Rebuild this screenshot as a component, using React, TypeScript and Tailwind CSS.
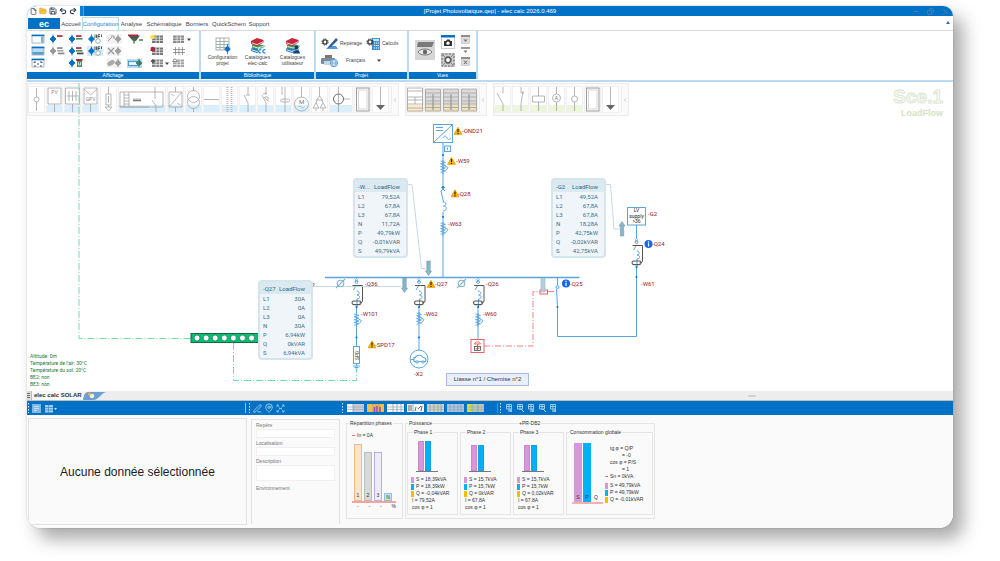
import type { ReactNode } from "react";
import { ChevronLeft, Copy, File, FolderOpen, MapPin, Minus, PenLine, Redo2, Save, Undo2, X } from "lucide-react";

type IconProps = { w: number; h: number; children: ReactNode; className?: string };

const Icon = ({ w, h, children, className = "" }: IconProps) => (
  <svg width={w} height={h} viewBox={`0 0 ${w} ${h}`} fill="none" className={`block shrink-0 ${className}`} aria-hidden="true">
    {children}
  </svg>
);

const BLUE = "#0072c6";

/* ---------- title bar ---------- */

const TitleBar = () => (
  <header className="flex h-[10px] items-stretch bg-[#0072c6]">
    <div className="flex w-[53px] items-center justify-between bg-white pr-[3px] pl-[3px]">
      <button aria-label="Nouveau"><File size={7} color="#444" strokeWidth={2.4} /></button>
      <button aria-label="Ouvrir"><FolderOpen size={8} color="#e0a92e" fill="#f5c542" /></button>
      <button aria-label="Enregistrer"><Save size={8} color="#2c3e57" strokeWidth={2.6} /></button>
      <button aria-label="Annuler"><Undo2 size={8} color="#2c3e57" strokeWidth={3.4} /></button>
      <button aria-label="Rétablir"><Redo2 size={8} color="#2c3e57" strokeWidth={3.4} /></button>
    </div>
    <div className="w-[4px] border-r border-[#4f9bd8] bg-[#0f7fd0]" />
    <h1 className="flex-1 pr-[16px] text-center text-[6px] leading-[10px] text-white">
      [Projet Photovoltaique.qep] - elec calc 2026.0.469
    </h1>
    <div className="flex items-center gap-[8px] pr-[4px] text-[#5d7f9c]">
      <button aria-label="Réduire"><Minus size={7} strokeWidth={3} /></button>
      <button aria-label="Restaurer"><Copy size={7} strokeWidth={3} className="-scale-x-100" /></button>
      <button aria-label="Fermer"><X size={7} strokeWidth={3} /></button>
    </div>
  </header>
);

/* ---------- tabs ---------- */

const tabs = [
  { label: "Accueil", width: "w-[22px]" },
  { label: "Configuration", width: "w-[37px]", active: true },
  { label: "Analyse", width: "w-[25px]" },
  { label: "Schématique", width: "w-[40px]" },
  { label: "Borniers", width: "w-[26px]" },
  { label: "QuickSchem", width: "w-[38px]" },
  { label: "Support", width: "w-[22px]" },
];

const TabBar = () => (
  <nav className="flex h-[15px] items-end border-b border-[#d9d9d9] bg-white pl-px">
    <button className="mb-px h-[11px] w-[32px] bg-[#0072c6] text-[9px] leading-[10px] font-bold text-white">ec</button>
    {tabs.map((tab) => (
      <button
        key={tab.label}
        className={`${tab.width} h-[13px] text-center text-[6px] leading-[12px] whitespace-nowrap ${
          tab.active ? "border-x border-t border-[#b5d8f3] text-[#2a86cf]" : "text-[#444]"
        }`}
      >
        <span className="-mx-2">{tab.label}</span>
      </button>
    ))}
    <button aria-label="Réduire le ruban" className="mr-[3px] mb-[6px] ml-auto">
      <Icon w={4} h={3}><path d="M0 3L2 0L4 3Z" fill="#2f6fb0" /></Icon>
    </button>
  </nav>
);

/* ---------- ribbon ---------- */

const Diamond = ({ x, color = BLUE }: { x: number; color?: string }) => (
  <path d={`M${x} 0.5V9.5M${x} 2L${x + 3} 5L${x} 8L${x - 3} 5Z`} fill={color} stroke={color} strokeWidth="0.9" />
);

const grid = (x: number, color: string) => (
  <>
    <rect x={x} y="1.5" width="11" height="7.5" fill={color} />
    <path d={`M${x} 4H${x + 11}M${x} 6.5H${x + 11}M${x + 4} 1.5V9M${x + 7.5} 1.5V9`} stroke="#fff" strokeWidth="0.6" />
  </>
);

const windowIcon = (kind: number) => (
  <>
    <rect x="2" y="1" width="12" height="8" fill={kind === 1 ? "#b9dcf2" : "#fff"} stroke="#6b8ea3" strokeWidth="0.6" />
    <path d="M1.7 1.5H14.3" stroke={BLUE} strokeWidth="1.6" />
    {kind === 0 && <rect x="11" y="2.5" width="2.6" height="6.2" fill="#7fb6bd" />}
    {kind === 1 && <rect x="2.4" y="6" width="11.2" height="2.6" fill="#5d9ec9" />}
    {kind === 2 && <path d="M4 4H6M4 4V5M12 4H10M12 4V5M4 8H6M12 8H10M8 5V7" stroke="#333" strokeWidth="0.9" />}
  </>
);

const probeIcon = (color: string, bars: string[]) => (
  <>
    <Diamond x={4} color={color} />
    {bars.map((c, i) => (
      <rect key={i} x={i === 2 ? 9 : 8} y={1.2 + i * 2.7} width={i === 0 ? 5.5 : 6.5} height="1.7" fill={c} />
    ))}
  </>
);

const textProbe = (on: boolean) => (
  <>
    {on && <rect x="0" y="0" width="16" height="10" fill="#d9ebf9" />}
    <Diamond x={4.5} />
    <path d="M8 0.5V4M9.5 0.5V4M11 4V0.8H13M11 2.5H13M14.5 0.5V3" stroke="#333" strokeWidth="0.8" />
    <circle cx="11" cy="7" r="2.3" fill="#fff" stroke="#6fa58e" strokeWidth="0.8" />
  </>
);

const greyProbe = (kind: number) => (
  <>
    <rect x="0.5" y="0.5" width="15" height="9" fill="#f0f0f0" />
    {kind === 0 && <path d="M2 7L6 3M5 2H8V5" stroke="#9a9a9a" />}
    {kind === 1 && <path d="M2 2L8 8M8 2L2 8" stroke="#9a9a9a" strokeWidth="1.2" />}
    {kind === 2 && <ellipse cx="5" cy="5" rx="4" ry="2.3" fill="#aaa" transform="rotate(-30 5 5)" />}
    <Diamond x={12} color="#a0a0a0" />
  </>
);

const ribbonGrid: (ReactNode | null)[][] = [
  [
    windowIcon(0),
    probeIcon(BLUE, ["#b3243a"]),
    probeIcon(BLUE, ["#b3243a", "#4d8d5c"]),
    textProbe(false),
    greyProbe(0),
    <><path d="M1 1.5H13L9 7H6Z" fill="#4c5a50" /><path d="M1 1.2H11" stroke="#b3243a" strokeWidth="1.6" /><path d="M7 5V9.5M12 6H16" stroke="#3f8048" strokeWidth="1.5" /></>,
    <>{grid(3, "#777")}<circle cx="3.5" cy="3" r="2.3" fill="#f3e53b" /></>,
    grid(2, "#8a8a8a"),
  ],
  [
    windowIcon(1),
    probeIcon("#999", ["#888", "#aaa", "#888"]),
    probeIcon(BLUE, ["#b3243a", "#4d8d5c", "#444"]),
    textProbe(true),
    greyProbe(1),
    null,
    <>{grid(3, "#777")}<path d="M1.5 5V3A2 2 0 0 1 6 3V5Z" fill="#b3243a" /></>,
    <path d="M4.5 1V9M8 1V9M11.5 1V9M2 3.5H14M2 6.5H14" stroke="#777" strokeWidth="0.7" />,
  ],
  [
    windowIcon(2),
    null,
    <><Diamond x={4} /><rect x="9" y="1" width="5" height="8" fill="#4d8d5c" /><rect x="8" y="1" width="6.5" height="1.8" fill="#b3243a" /><path d="M10.5 4V7H12.5V4" stroke="#fff" strokeWidth="0.7" /></>,
    null,
    greyProbe(2),
    <><rect x="0" y="1" width="15" height="9" fill="#b5d9f5" /><rect x="1.5" y="3.5" width="9" height="4" fill="#e8f5ff" stroke="#2a86cf" strokeWidth="0.8" /><Diamond x={12} color="#3f8073" /></>,
    <>{grid(3, "#888")}<path d="M1.5 3L4 1L6.5 3L4 5.5Z" fill="#555" /></>,
    <>{grid(2, "#a5a5a5")}<path d="M1.5 3.5L4 0.5L6.5 3.5Z" fill="#fff" stroke="#555" strokeWidth="0.6" /></>,
  ],
];

const Caret = () => <Icon w={4} h={3}><path d="M0 0.5H4L2 3Z" fill="#444" /></Icon>;

const GearShape = ({ x, y }: { x: number; y: number }) => (
  <>
    <circle cx={x} cy={y} r="2.1" fill="#fff" stroke="#3b3b3b" strokeWidth="1.4" />
    <circle cx={x} cy={y} r="3.2" stroke="#3b3b3b" strokeWidth="0.9" strokeDasharray="1.3 1.2" />
  </>
);

const Books = ({ user }: { user?: boolean }) => (
  <Icon w={17} h={17}>
    <path d="M2 11.5L8 10L15 12V13.5L8 16L2 14Z" fill="#2b7cc0" />
    <path d="M2.5 12.8L8 14.5L14.5 12.3" stroke="#e6f1fa" strokeWidth="0.9" />
    <path d="M3 8L9 7L15.5 8.5V10L9 12.5L3 10.8Z" fill="#3f9a5c" />
    <path d="M3.5 9.5L9 11L15 9" stroke="#e8f5ec" strokeWidth="0.9" />
    <path d="M2 4L8 1L14.5 3V5.5L8 9L2 7Z" fill="#c8263a" />
    <path d="M2.5 5.8L8 7.6L14 4.8" stroke="#f8e3e5" strokeWidth="0.9" />
    {user ? (
      <><circle cx="12.5" cy="10.5" r="2" fill="#143f73" /><path d="M9 16.5C9 12 16 12 16 16.5Z" fill="#143f73" /></>
    ) : (
      <><rect x="9" y="11.5" width="8" height="5.5" fill="#fff" /><path d="M12.2 13A1.6 1.6 0 1 0 12 15.6M16.4 13A1.6 1.6 0 1 0 16.4 15.6" stroke="#1b8ad4" strokeWidth="1.2" /></>
    )}
  </Icon>
);

const RibbonGroup = ({ title, width, children }: { title: string; width: string; children: ReactNode }) => (
  <section className={`${width} flex flex-col border-r-2 border-[#b9dbf3]`}>
    <div className="flex-1">{children}</div>
    <h2 className="h-[7px] bg-[#0072c6] text-center text-[5px] leading-[7px] text-white">{title}</h2>
  </section>
);

const BigButton = ({ icon, lines }: { icon: ReactNode; lines: string[] }) => (
  <button className="flex w-[34px] flex-col items-center text-center text-[5px] leading-[6px] text-[#444]">
    {icon}
    {lines.map((line) => <span key={line}>{line}</span>)}
  </button>
);

const Ribbon = () => (
  <div className="flex h-[51px] border-b-2 border-[#b9dbf3] bg-white pb-px">
    <RibbonGroup title="Affichage" width="w-[174px]">
      <div className="grid grid-cols-[19px_19px_19px_19px_21px_22px_22px_28px] pt-[2px] pl-[3px]">
        {ribbonGrid.flatMap((row, r) =>
          row.map((cell, c) => (
            <div key={`${r}-${c}`} className="flex h-[12px] items-center">
              {cell && (
                <button aria-label={`Affichage ${r + 1}.${c + 1}`}><Icon w={16} h={10}>{cell}</Icon></button>
              )}
              {((r === 0 && c === 7) || (r === 2 && c === 6)) && <Caret />}
            </div>
          ))
        )}
      </div>
    </RibbonGroup>
    <RibbonGroup title="Bibliothèque" width="w-[115px]">
      <div className="flex justify-center gap-px pt-[6px]">
        <BigButton
          lines={["Configuration", "projet"]}
          icon={
            <Icon w={17} h={17}>
              <rect x="2" y="1" width="13" height="12" fill="#fff" stroke="#999" strokeWidth="0.8" />
              <path d="M2 4.5H15M2 7.5H15M2 10.5H15M6 1V13M10 1V13" stroke="#8aa79c" strokeWidth="0.8" />
              <path d="M13.5 7V17M13.5 9L16.3 12L13.5 15L10.7 12Z" fill={BLUE} stroke={BLUE} strokeWidth="0.8" />
            </Icon>
          }
        />
        <BigButton icon={<Books />} lines={["Catalogues", "elec-calc"]} />
        <BigButton icon={<Books user />} lines={["Catalogues", "utilisateur"]} />
      </div>
    </RibbonGroup>
    <RibbonGroup title="Projet" width="w-[93px]">
      <div className="flex flex-col gap-[4px] pt-[6px] pl-[5px] text-[5px] text-[#444]">
        <div className="flex items-center gap-[4px]">
          <button className="flex w-[41px] items-center gap-[2px]">
            <Icon w={17} h={13}>
              <path d="M5 12H17L15 9H8Z" fill="#4f9bdc" />
              <path d="M8 9L15 1L17 3L10 10L7 11Z" fill="#2d5f97" />
              <GearShape x={4} y={5} />
            </Icon>
            Repérage
          </button>
          <button className="flex items-center gap-[2px]">
            <Icon w={14} h={13}>
              <rect x="6" y="1" width="8" height="12" fill="#3b93d6" />
              <path d="M7 3H13" stroke="#fff" strokeWidth="1.5" />
              <path d="M8 6H13M8 8.5H13M8 11H13" stroke="#fff" strokeWidth="1.2" strokeDasharray="1.2 0.8" />
              <GearShape x={4} y={5} />
            </Icon>
            Calculs
          </button>
        </div>
        <label className="flex items-center gap-[8px]">
          <Icon w={17} h={13}>
            <rect x="4" y="1" width="7" height="4" fill="#777" />
            <rect x="0" y="4" width="14" height="6" rx="1" fill="#7d8b99" />
            <rect x="3" y="7" width="8" height="4" fill="#bcd9ef" />
            <circle cx="13" cy="9" r="3.7" fill="#d8ebf9" stroke="#4a8fc6" strokeWidth="0.8" />
            <path d="M9.3 9H16.7M13 5.3C10.5 7.5 10.5 10.5 13 12.7C15.5 10.5 15.5 7.5 13 5.3" stroke="#4a8fc6" strokeWidth="0.6" />
          </Icon>
          <select aria-label="Langue" className="w-[23px] appearance-none text-[5px] leading-[7px]">
            <option>Français</option>
          </select>
          <Caret />
        </label>
      </div>
    </RibbonGroup>
    <RibbonGroup title="Vues" width="w-[69px]">
      <div className="flex items-start gap-[6px] pt-[4px] pl-[6px]">
        <button aria-label="Afficher la vue" className="mt-[5px]">
          <Icon w={20} h={20}>
            <rect width="20" height="20" fill="#d6d6d6" />
            <path d="M3 2H19L17 7H2Z" fill="#7a7a7a" />
            <path d="M3 12C6 8 14 8 17 12C14 16 6 16 3 12Z" fill="#eee" stroke="#777" />
            <circle cx="10" cy="12" r="2.2" fill="#666" />
          </Icon>
        </button>
        <div className="flex flex-col gap-[4px]">
          <button aria-label="Capturer">
            <Icon w={14} h={14}>
              <rect x="0.5" y="0.5" width="13" height="13" fill="#fff" stroke="#ccc" />
              <path d="M0 1.2H14" stroke={BLUE} strokeWidth="2.4" />
              <path d="M3 6H5L6 4.5H8.5L9.5 6H11V11H3Z" fill="#333" />
              <circle cx="7" cy="8.2" r="1.6" fill="#fff" />
            </Icon>
          </button>
          <button aria-label="Capturer la zone">
            <Icon w={14} h={14}>
              <rect width="14" height="14" fill="#ccc" />
              <rect x="1" y="1" width="12" height="12" stroke="#666" strokeDasharray="2 1.5" />
              <circle cx="7" cy="7" r="3" stroke="#555" strokeWidth="1.4" />
              <path d="M2 2L12 12M12 2L2 12" stroke="#888" />
              <circle cx="7" cy="7" r="1.5" fill="#fff" />
            </Icon>
          </button>
        </div>
        <div className="flex flex-col gap-[2px]">
          {[0, 1, 2].map((i) => (
            <button key={i} aria-label={`Vue ${i + 1}`}>
              <Icon w={9} h={9}>
                {i !== 1 && <rect x="0.5" y="0.5" width="8" height="8" fill="#ddd" stroke="#bbb" strokeWidth="0.6" />}
                <path d={i === 1 ? "M0 2H9" : "M0 1H9"} stroke="#777" strokeWidth="1.6" />
                {i === 2 ? <path d="M3 3.5L6 7M6 3.5L3 7" stroke="#666" /> : <path d="M2.5 4.5H6.5L4.5 7Z" fill="#777" />}
              </Icon>
            </button>
          ))}
        </div>
      </div>
    </RibbonGroup>
  </div>
);

/* ---------- symbol palette ---------- */

const INK = "#a3a3a3";

const sym = (d: string, extra?: ReactNode) => (
  <>
    <path d={d} stroke={INK} strokeWidth="0.8" />
    {extra}
  </>
);

const earth = sym("M7.5 0V18", <path d="M3 18H12L7.5 23Z" fill="#666" />);
const panel = <><rect x="1.5" y="1" width="12.5" height="23" stroke="#999" /><rect x="3.5" y="3" width="8.5" height="19" stroke="#ccc" strokeWidth="0.8" /></>;
const cabinet = (
  <>
    <rect x="0" y="2" width="16" height="15" fill="#dadada" />
    <rect x="0" y="17" width="16" height="7" fill="#ecdfc0" />
    <path d="M0.5 2H15.5V24H0.5ZM0 6H16M0 10H16M0 14H16M0 17H16M0 20.5H16" stroke={INK} strokeWidth="0.8" />
    <path d="M8 7V23" stroke="#8a8a8a" />
  </>
);

type Palette = { tint: string; items: { w: string; vw: number; flat?: boolean; art: ReactNode }[] };

const N = "w-[15px]";

const palettes: Palette[] = [
  {
    tint: "bg-[#dbeefb]",
    items: [
      { w: N, vw: 15, flat: true, art: sym("M7.5 1V10M7.5 15V24", <circle cx="7.5" cy="12.5" r="2.5" stroke={INK} strokeWidth="0.8" />) },
      { w: N, vw: 15, art: sym("M1 1H14V17H1ZM7.5 17V25", <text x="7.5" y="7" textAnchor="middle" fontSize="5" fill="#888">PV</text>) },
      { w: N, vw: 15, art: sym("M0.5 1H14.5V17H0.5ZM2 9H13M4 4V14M7.5 4V14M11 4V14M7.5 17V25") },
      { w: N, vw: 15, art: sym("M1 1H14V17H1ZM1 2L7.5 8L14 2M7.5 17V25", <text x="7.5" y="14" textAnchor="middle" fontSize="5" fill="#888">GPV</text>) },
      { w: N, vw: 15, flat: true, art: sym("M7.5 0V7M5 7H10V18H5ZM7.5 9V16M7.5 18V20M4 20H11L7.5 24Z") },
      { w: "w-[46px]", vw: 46, art: sym("M1 5H44V20H1ZM5 5V20M10 5V20M5 8H10M5 11H10M5 14H10M5 17H10M14 12H22M36 0V12M33 13L37 19M37 18V25M1 20H30", <path d="M14 13.5H22" stroke="#777" strokeWidth="1.5" />) },
      { w: N, vw: 15, art: sym("M1 5H14V20H1ZM1 20L14 5M7.5 0V5M7.5 20V25M3 8C4 6 5 10 6.5 8M9 17C10 15 11 19 12.5 17") },
      { w: N, vw: 15, art: sym("M7.5 0V4M7.5 21V25", <><circle cx="7.5" cy="9.5" r="6" stroke={INK} strokeWidth="0.8" /><circle cx="7.5" cy="15.5" r="6" stroke={INK} strokeWidth="0.8" /></>) },
      { w: N, vw: 15, art: sym("M0 12.5H15") },
      { w: N, vw: 15, art: <path d="M5.5 0V25M9.5 0V25" stroke="#bdbdbd" strokeWidth="2" strokeDasharray="1 1" /> },
      { w: N, vw: 15, art: sym("M8 0V8M4 8L8 16V25M6 8H10") },
      { w: N, vw: 15, art: sym("M8 0V8M4 8L8 16V25M6 10L10 14M7 10H10V14M5 7L9 6") },
      { w: N, vw: 15, art: sym("M9 0V25M6 0V8", <ellipse cx="9" cy="13.5" rx="5" ry="1.6" stroke={INK} strokeWidth="0.8" />) },
      { w: N, vw: 15, art: sym("M7.5 0V10M4.5 20C6 17 8.5 23 10.5 20", <><circle cx="7.5" cy="17" r="7" stroke={INK} strokeWidth="0.8" /><text x="7.5" y="17" textAnchor="middle" fontSize="6" fill="#777">M</text></>) },
      { w: N, vw: 15, flat: true, art: sym("M7.5 0V9M4.5 13L7.5 9L10.5 13ZM1 21L4 16L7 21ZM8 21L11 16L14 21ZM5 13L4 16M10 13L11 16M4 21V24M11 21V24") },
      { w: "w-[22px]", vw: 22, art: sym("M8.5 0V25M13 12H20", <circle cx="8.5" cy="12" r="5" stroke="#6b6b6b" />) },
      { w: N, vw: 15, flat: true, art: panel },
      { w: N, vw: 15, flat: true, art: earth },
    ],
  },
  {
    tint: "bg-[#fbeacb]",
    items: [
      { w: "w-[16px]", vw: 16, art: sym("M0.5 1H15.5V24H0.5ZM0 4H16M0 10H16M0 13H16M0 17H16M0 21H16M8 10V17") },
      { w: "w-[16px]", vw: 16, art: cabinet },
      { w: "w-[16px]", vw: 16, art: cabinet },
      { w: "w-[16px]", vw: 16, art: cabinet },
    ],
  },
  {
    tint: "bg-[#edf5dc]",
    items: [
      { w: N, vw: 15, art: sym("M8 0V6M2 6L8 17V24") },
      { w: N, vw: 15, art: sym("M8 0V6H11M10 4L8 17V24") },
      { w: N, vw: 15, art: sym("M7.5 0V9M1.5 9H13.5V15H1.5ZM7.5 15V24") },
      { w: N, vw: 15, art: sym("M7.5 0V7M7.5 15V24", <><circle cx="7.5" cy="11" r="4" stroke={INK} strokeWidth="0.8" /><text x="7.5" y="13" textAnchor="middle" fontSize="5" fill="#777">A</text></>) },
      { w: N, vw: 15, art: sym("M7.5 0V9M7.5 15V24", <circle cx="7.5" cy="12" r="3" stroke={INK} strokeWidth="0.8" />) },
      { w: N, vw: 15, flat: true, art: panel },
      { w: N, vw: 15, flat: true, art: earth },
    ],
  },
];

const PaletteBar = () => (
  <div className="flex gap-[6px] pt-px">
    {palettes.map((palette, p) => (
      <div key={p} className={`flex items-center border border-[#ededed] bg-[#fafafa] py-[2px] pl-px ${p === 1 ? "gap-[2px]" : "gap-[3px]"}`}>
        {palette.items.map((item, i) => (
          <button key={i} aria-label={`Symbole ${p + 1}.${i + 1}`} className={`${item.w} flex h-[25px] flex-col justify-end bg-white outline outline-[#f0f0f0]`}>
            <span className={`-mb-[25px] block h-[7px] ${item.flat ? "" : palette.tint}`} />
            <Icon w={item.vw} h={25} className="relative">{item.art}</Icon>
          </button>
        ))}
        <button aria-label="Replier" className="flex h-[27px] w-[7px] items-center border-l border-[#eee] text-[#aaa]">
          <ChevronLeft size={6} />
        </button>
      </div>
    ))}
  </div>
);

/* ---------- schematic ---------- */

const WIRE = "#5aa5df";

const Breaker = ({ x, y }: { x: number; y: number }) => (
  <g>
    <path d={`M${x} ${y}V${y + 2}M${x - 1.5} ${y + 2.5}L${x + 1.5} ${y + 5}M${x + 1.5} ${y + 2.5}L${x - 1.5} ${y + 5}M${x} ${y + 8}L${x - 3} ${y + 13}M${x} ${y + 14}c3.5 0 3.5 4 0.5 4c3.5 0 3.5 4 0 4V${y + 31}`} stroke={WIRE} />
    <circle cx={x} cy={y + 5} r="1.5" stroke={WIRE} strokeWidth="0.8" />
    <path d={`M${x - 4} ${y + 8.5}H${x + 6}V${y + 24}Q${x + 6} ${y + 26} ${x + 3} ${y + 26}`} stroke="#555" />
    <rect x={x - 4.5} y={y + 24} width="9" height="3.6" rx="1.8" stroke="#555" strokeWidth="1.1" />
    <circle cx={x} cy={y + 30} r="1" fill={BLUE} />
  </g>
);

const Cable = ({ x, y, h = 13 }: { x: number; y: number; h?: number }) => (
  <path
    d={`M${x - 2.5} ${y}l5 1.4l-5 1.4l5 1.4l-5 1.4l5 1.4l-5 1.4l5 1.4l-5 1.4M${x} ${y - 1}V${y + h}M${x + 2} ${y + 5}l3 1.5l-2 3`}
    stroke={WIRE}
    strokeWidth="0.9"
  />
);

const Warning = ({ x, y }: { x: number; y: number }) => (
  <g>
    <path d={`M${x} ${y - 3.6}L${x + 3.8} ${y + 3.3}H${x - 3.8}Z`} fill="#f7b50c" stroke="#f0a400" strokeLinejoin="round" />
    <path d={`M${x} ${y - 2}V${y + 0.9}M${x} ${y + 1.8}V${y + 3}`} stroke="#222" strokeWidth="1.2" />
  </g>
);

const Info = ({ x, y }: { x: number; y: number }) => (
  <g>
    <circle cx={x} cy={y} r="4" fill="#1467f0" />
    <path d={`M${x} ${y - 2.7}V${y - 1.5}M${x} ${y - 0.7}V${y + 2.6}`} stroke="#fff" strokeWidth="1.2" />
  </g>
);

const FlowArrow = ({ x, y, up }: { x: number; y: number; up?: boolean }) => (
  <path
    d="M-1.7 -7H1.7V3H3L0 7.5L-3 3H-1.7Z"
    transform={`translate(${x} ${y})${up ? " rotate(180)" : ""}`}
    fill="#8ab5c8"
    stroke="#6a9db4"
    strokeWidth="0.6"
  />
);

const labels: [string, number, number][] = [
  ["-OND21", 462, 133],
  ["-W59", 456, 163],
  ["-Q28", 458, 196],
  ["-W63", 448, 226],
  ["-Q36", 365, 286],
  ["-W101", 361, 316],
  ["-SPD17", 375, 347],
  ["-Q27", 435, 286],
  ["-W62", 424, 316],
  ["-X2", 414, 376],
  ["-Q26", 486, 286],
  ["-W60", 483, 316],
  ["-Q25", 570, 286],
  ["-G2", 648, 216],
  ["-Q24", 652, 246],
  ["-W61", 641, 286],
  ["?", 312, 287],
];

const warnings = [[458, 131], [451.5, 161], [455, 193.5], [431, 284], [372, 344.5]];

const Schematic = () => (
  <svg
    viewBox="27 82 926 309"
    fill="none"
    className="pointer-events-none absolute top-0 left-0 h-[309px] w-[926px]"
    role="img"
    aria-label="Schéma unifilaire"
  >
    {/* protective earth */}
    <path d="M79 83V338.5H191M233.5 343V380.5H356.5V369" stroke="#6fe0ab" strokeDasharray="7 2 1 2" />
    <rect x="191" y="333.5" width="68" height="9" fill="#00bf73" stroke="#136b45" />
    {[0, 1, 2, 3, 4, 5, 6].map((i) => (
      <circle key={i} cx={197 + i * 9.1} cy="338" r="3" fill="#fff" stroke="#1e7d54" strokeWidth="0.8" />
    ))}

    {/* busbar and main wires */}
    <g stroke={WIRE}>
      <path d="M325 277.5H579.5" strokeWidth="1.3" />
      <path d="M443 142V190M443 212V277M419 307V350M478 307V339M356.5 307V346" />
      <path d="M557.5 277V285M556.5 289L557.5 307V336.5H636.5V268M636.5 225V238" />
      <circle cx="557.5" cy="287" r="1.5" />
      <rect x="433.5" y="124.5" width="19" height="18" />
      <path d="M433.5 142.5L452.5 124.5M436 127.5H443M436 130.5H443M443 138c2-3 3-2 4 0s2 2 4 0" />
      <rect x="444.5" y="146" width="6" height="5.5" fill="#fff" />
      <path d="M447.5 147.5V150" />
      <path d="M441 187L445 191M445 187L441 191M441 191L443.5 202M443 202c4 0 3.5 4 0.5 4c4 0 3.5 5-0.5 5" />
    </g>
    {[[443, 155], [443, 187], [443, 217], [557.5, 307], [636.5, 277], [356.5, 337.5], [419, 337.5]].map(([x, y]) => (
      <circle key={`${x}-${y}`} cx={x} cy={y} r="1" fill={BLUE} />
    ))}

    <Cable x={443} y={161} />
    <Cable x={443} y={223} />
    <Cable x={356.5} y={314} />
    <Cable x={419} y={313} h={8} />
    <Cable x={478} y={314} />
    <Breaker x={356.5} y={277} />
    <Breaker x={419} y={277} />
    <Breaker x={478} y={277} />
    <Breaker x={636.5} y={237} />

    {/* surge arrester */}
    <rect x="353.5" y="346.5" width="6" height="17" fill="#fff" stroke={WIRE} />
    <text transform="translate(358.5 360) rotate(-90)" fontSize="5" fill="#333">SPD</text>
    <path d="M356.5 363.5V366M353 366H360M354.5 367.5H358.5M355.5 369H357.5" stroke={WIRE} />

    {/* vehicle charging point */}
    <circle cx="419" cy="359" r="9" fill="#fff" stroke={WIRE} />
    <path d="M411 359.5H414M414 357.5V361.5H425.5C427 358.5 424.5 357.5 423 357.5C421.5 354.5 416.5 354.5 415.5 357.5Z" stroke={WIRE} strokeWidth="1.1" />
    <circle cx="417" cy="362" r="1.2" fill="#fff" stroke={WIRE} />
    <circle cx="423" cy="362" r="1.2" fill="#fff" stroke={WIRE} />

    {/* emergency stop and its trip line */}
    <rect x="471" y="339.5" width="13" height="13" stroke="#ef5f5f" />
    <path d="M474.5 344c1-3 5-3 6 0ZM477.5 344V347" stroke="#ef5f5f" />
    <rect x="474.5" y="346.5" width="6" height="4" fill="#fff" stroke="#333" strokeWidth="0.7" />
    <path d="M475.5 349L479.5 348M477.5 346.5V350.5" stroke="#a33" strokeWidth="0.8" />
    <path d="M484 346H533V291.5H540M548 291.5H557" stroke="#f58080" strokeDasharray="6 2 1 2" />
    <rect x="540" y="290" width="7.5" height="4" stroke="#ef5f5f" />

    {/* LV supply */}
    <rect x="627.5" y="207.5" width="18" height="17.5" stroke={WIRE} />
    <g fontSize="5" fill="#222" textAnchor="middle">
      <text x="636.5" y="212">LV</text>
      <text x="636.5" y="218">supply</text>
      <text x="636.5" y="223">&gt;36</text>
    </g>

    {/* load flow callouts */}
    <path d="M408 184.5H412L421.5 268.5H426M606 184.5H610.5L614 229H619M312 286.5H401" stroke="#c6dae3" />
    <FlowArrow x={428.5} y={268} />
    <FlowArrow x={404.5} y={285} />
    <FlowArrow x={622} y={229} up />
    <rect x="541" y="278" width="4" height="14" fill="#b5d0dc" stroke="#8ab5c8" strokeWidth="0.6" />
    <g stroke="#86b4ca" strokeWidth="1.1">
      <circle cx="340.5" cy="283.5" r="3.3" />
      <path d="M336 288L345 279" />
      <circle cx="461.5" cy="283.5" r="3.3" />
      <path d="M457 288L466 279" />
    </g>

    {warnings.map(([x, y]) => <Warning key={`${x}-${y}`} x={x} y={y} />)}
    <Info x={566} y={283.5} />
    <Info x={648.5} y={244} />
    <g fontSize="6" fill="#96211f">
      {labels.map(([text, x, y]) => <text key={text} x={x} y={y}>{text}</text>)}
    </g>
  </svg>
);

type LoadFlow = { name: string; place: string; values: string[] };

const loadFlows: LoadFlow[] = [
  { name: "-W...", place: "top-[96px] left-[326px]", values: ["79,52A", "67,8A", "67,8A", "11,72A", "49,79kW", "-0,01kVAR", "49,79kVA"] },
  { name: "-G2", place: "top-[96px] left-[524px]", values: ["49,52A", "67,8A", "67,8A", "18,28A", "42,75kW", "-0,02kVAR", "42,75kVA"] },
  { name: "-Q27", place: "top-[198px] left-[231px]", values: ["30A", "0A", "0A", "30A", "6,94kW", "0kVAR", "6,94kVA"] },
];

const quantities = ["L1", "L2", "L3", "N", "P", "Q", "S"];

const LoadFlowCard = ({ name, place, values }: LoadFlow) => (
  <div className={`absolute ${place} w-[55px] overflow-hidden rounded-[4px] border-2 border-[#d5e5ed] bg-[#eff5f9] pb-px text-[#3f6f8a]`}>
    <table className="w-full text-[6px] leading-[9px]">
      <thead className="bg-[#dbe9f0] text-[#2f6685]">
        <tr>
          <th className="h-[12px] pl-[3px] text-left font-normal">{name}</th>
          <th className="h-[12px] pr-[6px] text-right font-normal">LoadFlow</th>
        </tr>
      </thead>
      <tbody>
        {values.map((value, i) => (
          <tr key={quantities[i]}>
            <td className="h-[9px] pl-[3px]">{quantities[i]}</td>
            <td className="h-[9px] pr-[6px] text-right">{value}</td>
          </tr>
        ))}
      </tbody>
    </table>
  </div>
);

const Workspace = () => (
  <main className="relative min-h-[309px] flex-1 bg-white font-[Roboto,sans-serif]">
    <PaletteBar />
    <Schematic />
    {loadFlows.map((flow) => <LoadFlowCard key={flow.name} {...flow} />)}
    <div className="absolute top-[4px] right-[10px] text-right font-['Liberation_Sans',sans-serif] font-bold">
      <p className="text-[19px] leading-[22px] text-[#fbfcf8] [-webkit-text-stroke:1px_#dde6d1]">Sce.1</p>
      <p className="text-[9px] leading-[10px] text-[#d6e2c6]">LoadFlow</p>
    </div>
    <ul className="absolute bottom-[3px] left-[3px] text-[5px] leading-[7px] text-[#1b7a2c]">
      <li>Altitude: 0m</li>
      <li>Température de l'air: 30°C</li>
      <li>Température du sol: 20°C</li>
      <li>BE2: non</li>
      <li>BE3: non</li>
    </ul>
    <button className="absolute bottom-[5px] left-[419px] h-[13px] w-[83px] border border-[#a9bbdf] bg-[#e8effb] font-['Liberation_Sans',sans-serif] text-[6px] leading-[11px] whitespace-nowrap text-[#333]">
      Liasse n°1 / Chemise n°2
    </button>
  </main>
);

/* ---------- bottom dock ---------- */

const SheetTabs = () => (
  <div className="flex h-[10px] items-stretch border-b border-[#bdbdbd] bg-[#ededed]">
    <button aria-label="Feuilles" className="flex w-[5px] items-center border-r border-[#bbb] bg-[#ddd]">
      <Icon w={3} h={5}><path d="M0 0.5H3M0 2.5H3M0 4.5H3" stroke="#555" strokeWidth="0.8" /></Icon>
    </button>
    <button className="bg-[#f8f8f8] pl-[2px] text-[6px] leading-[9px] font-bold text-[#333]">elec calc SOLAR</button>
    <button aria-label="Nouvelle feuille">
      <Icon w={27} h={9}>
        <path d="M0 0H6C2 2 2 6 1 9H0Z" fill="#f8f8f8" />
        <path d="M1 9C2 3 3 1 7 1H24C19 2 17 9 11 9Z" fill="#6a9fd3" />
        <circle cx="10" cy="5" r="2.3" fill="#f6efd8" />
        <circle cx="7.5" cy="3" r="1.5" fill="#f2b533" />
      </Icon>
    </button>
    <div className="flex flex-1 items-center justify-center pl-[443px]">
      <div className="h-[2px] w-[8px] rounded-full bg-[#d0d0d0]" />
    </div>
  </div>
);

const Grip = () => (
  <Icon w={3} h={10}><path d="M1.5 0V10" stroke="#d8ebfa" strokeDasharray="1.5 1.5" /></Icon>
);

const thumbs: { accent?: string; cols: number[] }[] = [
  { cols: [6] },
  { cols: [6, 9, 12] },
  { cols: [6, 10, 14] },
  { cols: [6] },
  { cols: [3, 7, 11, 14], accent: "#d9d2c4" },
  { cols: [3, 7, 11, 14], accent: "#a9c8e6" },
  { cols: [5, 11] },
];

const DockToolbar = () => (
  <div className="flex h-[14px] shrink-0 items-center bg-[#0072c6]">
    <div className="flex w-[218px] items-center gap-[2px]">
      <Grip />
      <button aria-label="Liste">
        <Icon w={9} h={9}><rect width="9" height="9" fill="#7fb6e2" /><path d="M2 2.5H7M2 4.5H7M2 6.5H5" stroke="#d6eafa" strokeWidth="0.8" /></Icon>
      </button>
      <button aria-label="Colonnes" className="ml-[2px]">
        <Icon w={12} h={9}><rect x="0" y="1" width="8" height="7.5" fill="#a9cdea" /><path d="M3.5 1V8.5M0 3.5H8M0 6H8" stroke="#3b8fd0" strokeWidth="0.8" /><path d="M9 4H12L10.5 6Z" fill="#cfe5f6" /></Icon>
      </button>
    </div>
    <div className="flex w-[96px] items-center gap-[2px] border-l border-[#8fc1e8] pl-[2px] text-[#a5cdee]">
      <Grip />
      <button aria-label="Modifier"><PenLine size={9} strokeWidth={2.5} /></button>
      <button aria-label="Localiser"><MapPin size={10} strokeWidth={2.2} /></button>
      <button aria-label="Ajuster">
        <Icon w={9} h={9}><path d="M1 1L3.5 3.5M8 1L5.5 3.5M1 8L3.5 5.5M8 8L5.500 5.500M3 4.500H6M1 3V1H3M6 1H8V3M1 6V8H3M6 8H8V6" stroke="#a5cdee" strokeWidth="0.8" /></Icon>
      </button>
    </div>
    <div className="flex items-center gap-[3px] pr-[13px]">
      <Grip />
      {thumbs.map(({ accent, cols }, i) => (
        <button key={i} aria-label={`Mode ${i + 1}`}>
          <Icon w={17} h={8}>
            <rect width="17" height="8" fill={i === 1 ? "#efbf4a" : "#f3f5f6"} />
            {accent && <rect width="17" height="8" fill={accent} />}
            {i === 6 && <><rect width="5" height="8" fill="#e3dc3a" /><rect x="5" width="12" height="8" fill="#b7c9b5" /></>}
            {i === 0 && <rect x="6" width="11" height="8" fill="#c4cbd1" />}
            <path d={cols.map((c) => `M${c} 0V8`).join("")} stroke="#8795a1" strokeWidth="0.7" />
            {i !== 1 && i !== 3 && <path d="M0 3H17M0 5.5H17" stroke="#97a4af" strokeWidth="0.6" />}
            {i === 1 && <path d="M7.5 8V3M10 8V2M13 8V3" stroke="#9c4fa6" strokeWidth="1.5" />}
            {i === 3 && <path d="M1 2H5M1 4H5M1 6H5M8 7L9 3M11 5L14 2M14 7L15 2" stroke="#666" />}
          </Icon>
        </button>
      ))}
    </div>
    <div className="flex items-center gap-[4px] border-l border-[#3f95d5] pl-px">
      <Grip />
      {[0, 1, 2, 3, 4].map((i) => (
        <button key={i} aria-label={`Vue de grille ${i + 1}`}>
          <Icon w={7} h={8}>
            <path d="M0.5 0.5H5.5V5H0.5ZM0.5 2.5H5.5M3 0.5V6" stroke="#a9d2f2" strokeWidth="0.9" />
            <path d={i % 2 ? "M4 5L7 8" : "M2 7H6M5 5V8"} stroke="#c7e3f8" />
          </Icon>
        </button>
      ))}
    </div>
  </div>
);

const fields = [
  { id: "repere", label: "Repère", box: "h-[9px]" },
  { id: "localisation", label: "Localisation", box: "h-[9px]" },
  { id: "description", label: "Description", box: "h-[16px]" },
];

const PropertyForm = () => (
  <form className="w-[89px] border border-b-0 border-[#e2e2e2] px-[4px] pt-[2px] text-[5px] text-[#777]">
    {fields.map((field) => (
      <div key={field.id} className="mb-[2px] flex flex-col">
        <label htmlFor={field.id} className="leading-[7px]">{field.label}</label>
        <input id={field.id} className={`${field.box} border border-[#f0f0f0] bg-white px-px`} />
      </div>
    ))}
    <p className="pt-[2px] leading-[7px]">Environnement</p>
  </form>
);

const Group = ({ title, className, children }: { title: string; className: string; children: ReactNode }) => (
  <fieldset className={`min-w-0 border border-[#e4e4e4] ${className}`}>
    <legend className="ml-[2px] px-px text-[5px] leading-[6px] text-[#333]">{title}</legend>
    {children}
  </fieldset>
);

const swatches = ["bg-[#d896dc]", "bg-[#00b0f8]", "bg-[#f3c000]"];

const PowerList = ({ values }: { values: string[] }) => (
  <ul>
    {values.map((value, i) => (
      <li key={value} className="flex h-[7px] items-center gap-[2px] whitespace-nowrap">
        <span className={`h-[6px] w-[3px] ${swatches[i]}`} />
        {value}
      </li>
    ))}
  </ul>
);

const LimitKey = ({ text }: { text: string }) => (
  <p className="flex items-center gap-[2px] leading-[7px]">
    <span className="h-px w-[3px] bg-[#f26d6d]" />
    {text}
  </p>
);

const phases = [
  { title: "Phase 1", bar: "h-[30px]", power: ["S = 18,39kVA", "P = 18,39kW", "Q = -0,04kVAR"], current: "I = 79,52A" },
  { title: "Phase 2", bar: "h-[26px]", power: ["S = 15,7kVA", "P = 15,7kW", "Q = 0kVAR"], current: "I = 67,8A" },
  { title: "Phase 3", bar: "h-[26px]", power: ["S = 15,7kVA", "P = 15,7kW", "Q = 0,02kVAR"], current: "I = 67,8A" },
];

const Distribution = () => (
  <Group title="Répartition phases" className="h-[99px] w-[57px]">
    <div className="pt-[6px] pl-[5px] text-[5px] text-[#333]">
      <LimitKey text="In = 0A" />
      <div className="mt-[4px] flex h-[60px] w-[44px] items-end gap-[2px] border-b-2 border-[#f4a3a3] px-[2px] text-center leading-[9px]">
        <div className="flex h-[57px] w-[8px] items-end justify-center border border-[#f3b988] bg-[#fde3c8]">1</div>
        <div className="flex h-[49px] w-[8px] items-end justify-center border border-[#bbb] bg-[#d9d9d9]">2</div>
        <div className="flex h-[49px] w-[8px] items-end justify-center border border-[#b6aee6] bg-[#eeebff]">3</div>
        <div className="h-[8px] w-[8px] border border-[#8fc3d8] bg-[#c4e3ee] leading-[7px]">N</div>
      </div>
      <div className="flex w-[44px] justify-between pl-[5px] leading-[7px]">
        <span>-</span><span>-</span><span>-</span><span>%</span>
      </div>
    </div>
  </Group>
);

const Results = () => (
  <div className="flex gap-[2px] pt-px pl-[6px]">
    <Distribution />
    <fieldset className="relative h-[99px] min-w-0 border border-[#e4e4e4] px-px">
      <legend className="ml-px px-px text-[5px] leading-[6px] text-[#333]">Puissance</legend>
      <span className="absolute -top-[6px] left-[112px] bg-[#fafafa] px-px text-[5px] leading-[6px] text-[#333]">+PR-DB2</span>
      <div className="flex gap-[2px] pt-[3px] text-[5px] text-[#333]">
        {phases.map((phase) => (
          <Group key={phase.title} title={phase.title} className="h-[86px] w-[51px] pl-[3px]">
            <div className="ml-[5px] flex h-[37px] w-[22px] items-end gap-px border-b border-[#777] pl-[2px]">
              <div className={`${phase.bar} w-[6px] border border-[#c987cf] bg-[#d896dc]`} />
              <div className={`${phase.bar} w-[6px] border border-[#12a3e2] bg-[#00b0f8]`} />
            </div>
            <div className="pt-[4px] leading-[7px]">
              <PowerList values={phase.power} />
              <p className="pl-px">{phase.current}</p>
              <p className="pl-px">cos φ = 1</p>
            </div>
          </Group>
        ))}
        <Group title="Consommation globale" className="h-[86px] w-[87px]">
          <div className="flex gap-[2px] pl-[5px]">
            <div className="mt-[8px] flex h-[61px] w-[31px] items-end gap-px border-b-2 border-[#f7b0b0] pl-[2px] text-center leading-[9px]">
              <div className="flex h-[59px] w-[8px] items-end justify-center bg-[#d896dc]">S</div>
              <div className="flex h-[59px] w-[8px] items-end justify-center bg-[#00b0f8]">P</div>
              <div className="w-[8px]">Q</div>
            </div>
            <div className="mt-[10px] leading-[7px] whitespace-nowrap">
              <p className="pl-[5px]">tg φ = Q/P</p>
              <p className="pl-[17px]">= -0</p>
              <p className="pl-[5px]">cos φ = P/S</p>
              <p className="pl-[17px]">= 1</p>
              <LimitKey text="Sn = 0kVA" />
              <div className="pt-[2px]">
                <PowerList values={["S = 49,79kVA", "P = 49,79kW", "Q = -0,01kVAR"]} />
              </div>
            </div>
          </div>
        </Group>
      </div>
    </fieldset>
  </div>
);

const Dock = () => (
  <section className="flex h-[113px] gap-[4px] bg-[#fafafa] pl-px">
    <div className="my-[3px] flex w-[219px] items-center justify-center border border-[#e2e2e2]">
      <p className="text-[12px] text-[#1c1c1c]">Aucune donnée sélectionnée</p>
    </div>
    <div className="flex py-[4px]">
      <PropertyForm />
      <Results />
    </div>
  </section>
);

const App = () => (
  <div className="flex min-h-screen flex-col bg-white pt-[6px] pr-[47px] pb-[33px] pl-[27px] font-['Liberation_Sans',Arial,sans-serif]">
    <div className="flex flex-1 flex-col overflow-hidden rounded-t-[10px] rounded-b-[14px] bg-white shadow-[10px_11px_18px_rgba(0,0,0,0.34),0_0_2px_rgba(0,0,0,0.2)]">
      <TitleBar />
      <TabBar />
      <Ribbon />
      <Workspace />
      <SheetTabs />
      <DockToolbar />
      <Dock />
    </div>
  </div>
);

export default App;
